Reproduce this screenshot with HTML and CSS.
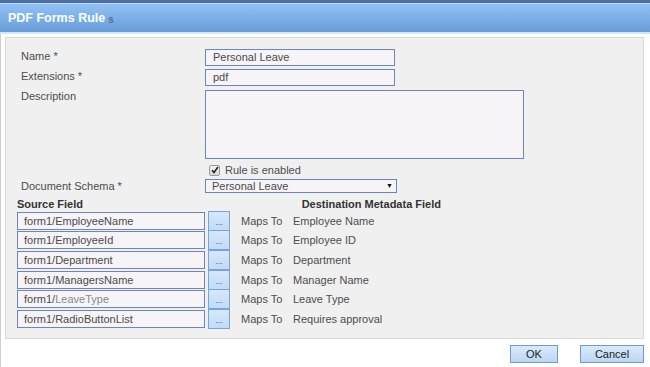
FILE: index.html
```html
<!DOCTYPE html>
<html>
<head>
<meta charset="utf-8">
<link rel="stylesheet" href="styles.css">
</head>
<body>
<div class="dialog">
  <div class="titlebar">
    <span class="title">PDF Forms Rule</span><span class="title-s">s</span>
  </div>
  <div class="content">
    <div class="panel">
      <div class="frow">
        <div class="lbl">Name *</div>
        <div class="field w190">Personal Leave</div>
      </div>
      <div class="frow">
        <div class="lbl">Extensions *</div>
        <div class="field w190">pdf</div>
      </div>
      <div class="frow">
        <div class="lbl">Description</div>
        <div class="field area"></div>
      </div>
      <div class="frow check-row">
        <div class="lbl"></div>
        <div class="check">
          <span class="box"><svg width="8" height="8" viewBox="0 0 8 8"><path d="M1 4.2 L3 6.5 L7 1" fill="none" stroke="#222" stroke-width="1.6"/></svg></span>
          <span class="check-text">Rule is enabled</span>
        </div>
      </div>
      <div class="frow">
        <div class="lbl">Document Schema *</div>
        <div class="select"><span>Personal Leave</span><span class="arrow">▼</span></div>
      </div>
      <div class="map-head">
        <span class="h-src">Source Field</span>
        <span class="h-dst">Destination Metadata Field</span>
      </div>
      <div class="map-row">
        <div class="src">form1/EmployeeName</div>
        <div class="dots">...</div>
        <span class="maps">Maps To</span>
        <span class="dest">Employee Name</span>
      </div>
      <div class="map-row">
        <div class="src">form1/EmployeeId</div>
        <div class="dots">...</div>
        <span class="maps">Maps To</span>
        <span class="dest">Employee ID</span>
      </div>
      <div class="map-row">
        <div class="src">form1/Department</div>
        <div class="dots">...</div>
        <span class="maps">Maps To</span>
        <span class="dest">Department</span>
      </div>
      <div class="map-row">
        <div class="src">form1/ManagersName</div>
        <div class="dots">...</div>
        <span class="maps">Maps To</span>
        <span class="dest">Manager Name</span>
      </div>
      <div class="map-row">
        <div class="src">form1/<span class="faint">LeaveType</span></div>
        <div class="dots">...</div>
        <span class="maps">Maps To</span>
        <span class="dest">Leave Type</span>
      </div>
      <div class="map-row">
        <div class="src">form1/RadioButtonList</div>
        <div class="dots">...</div>
        <span class="maps">Maps To</span>
        <span class="dest">Requires approval</span>
      </div>
    </div>
    <div class="buttons">
      <div class="btn ok">OK</div>
      <div class="btn cancel">Cancel</div>
    </div>
  </div>
</div>
</body>
</html>
```
FILE: styles.css
```css
html, body {
  margin: 0;
  padding: 0;
  background: #ffffff;
}
body {
  font-family: "Liberation Sans", Arial, sans-serif;
  font-size: 11px;
  color: #4a4a4a;
  width: 650px;
  height: 367px;
  overflow: hidden;
}
.dialog {
  width: 650px;
  height: 367px;
  display: flex;
  flex-direction: column;
}
.titlebar {
  height: 28px;
  border-top: 3px solid #4a6fa6;
  box-shadow: inset 0 1px 0 #c4dbf4;
  border-bottom: 2px solid #d6e5f5;
  background: linear-gradient(#92c2f6, #689dda);
  display: flex;
  align-items: center;
  padding-left: 8px;
  padding-top: 1px;
}
.title {
  color: #ffffff;
  font-weight: bold;
  font-size: 12.5px;
}
.title-s {
  color: #5a6f8c;
  font-weight: bold;
  font-size: 10px;
  margin-left: 3px;
  margin-top: 2px;
}
.content {
  flex: 1;
  border-left: 1px solid #cfcfcf;
  padding: 3px 6px 0 4px;
  display: flex;
  flex-direction: column;
}
.panel {
  background: #f0f0f0;
  border: 1px solid #d9d9d9;
  padding: 11px 0 0 11px;
  box-sizing: border-box;
  height: 302px;
}
.frow {
  display: flex;
  align-items: flex-start;
  margin-bottom: 3px;
}
.lbl {
  width: 184px;
  padding-left: 4px;
  line-height: 15px;
  color: #4d4d4d;
  flex: none;
}
.field {
  border: 1px solid #6f85b8;
  background: #f7f4f7;
  height: 15px;
  line-height: 15px;
  padding-left: 7px;
  box-sizing: content-box;
  color: #4a4a4a;
}
.w190 {
  width: 181px;
}
.area {
  width: 310px;
  height: 67px;
  margin-top: 1px;
}
.check-row {
  margin-top: 4px;
  margin-bottom: 2px;
}
.check {
  display: flex;
  align-items: center;
  padding-left: 4px;
  height: 14px;
}
.box {
  width: 9px;
  height: 9px;
  border: 1px solid #9a9a9a;
  border-radius: 2px;
  background: linear-gradient(#f4f4f4, #d8d8d8);
  display: flex;
  align-items: center;
  justify-content: center;
}
.check-text {
  margin-left: 5px;
  color: #4d4d4d;
}
.select {
  width: 184px;
  height: 12px;
  line-height: 12px;
  border: 1px solid #6f85b8;
  background: #f7f4f7;
  padding-left: 6px;
  display: flex;
  justify-content: space-between;
  align-items: center;
  color: #4a4a4a;
}
.arrow {
  font-size: 7px;
  color: #111;
  margin-right: 3px;
}
.map-head {
  display: flex;
  width: 424px;
  justify-content: space-between;
  font-weight: bold;
  color: #333333;
  line-height: 14px;
  margin-top: 0;
}
.map-row {
  display: flex;
  align-items: center;
  height: 19.6px;
}
.src {
  width: 180px;
  height: 16px;
  line-height: 16px;
  border: 1px solid #6f85b8;
  background: #f7f4f7;
  padding-left: 6px;
  color: #4a4a4a;
}
.faint {
  color: #8a8a8a;
}
.dots {
  width: 20px;
  height: 18px;
  margin-left: 3px;
  border: 1px solid #7aa3d6;
  background: linear-gradient(#d6e8fb, #c2dbf6);
  color: #3d5f95;
  font-size: 9px;
  text-align: center;
  line-height: 20px;
}
.maps {
  margin-left: 11px;
  width: 52px;
  color: #4d4d4d;
}
.dest {
  color: #4d4d4d;
}
.buttons {
  display: flex;
  justify-content: flex-end;
  gap: 22px;
  margin-top: 6px;
}
.btn {
  height: 16px;
  line-height: 16px;
  border: 1px solid #6f9ad0;
  background: linear-gradient(#d9eafc, #bcd7f4);
  text-align: center;
  color: #222;
}
.ok {
  width: 46px;
}
.cancel {
  width: 62px;
}
```
